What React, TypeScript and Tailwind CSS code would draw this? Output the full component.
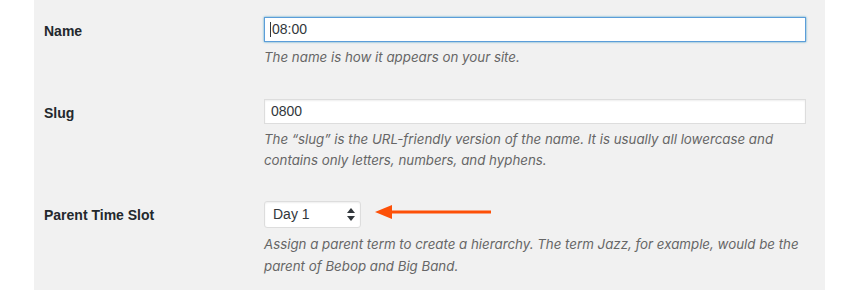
const font = { fontFamily: '"Liberation Sans", Arial, sans-serif' };
const descFont = { fontFamily: 'Inter, "Liberation Sans", Arial, sans-serif' };

const SortArrows = () => (
  <svg width="8" height="13" viewBox="0 0 8 13" className="fill-[#32373c]">
    <path d="M4 0 L8 5 L0 5 Z" />
    <path d="M4 13 L8 8 L0 8 Z" />
  </svg>
);

const PointerArrow = () => (
  <svg width="116" height="18" viewBox="0 0 116 18" className="ml-[14px] mt-[2px]">
    <path d="M0 9 L17 2 L17 16 Z" fill="#fd5008" />
    <rect x="16" y="7.5" width="100" height="3" fill="#fd5008" />
  </svg>
);

const Description = ({ children, cls }: { children: React.ReactNode; cls: string }) => (
  <p className={`italic text-[#666] text-[13.3px] w-[548px] ${cls}`} style={descFont}>
    {children}
  </p>
);

const App = () => {
  return (
    <div
      className="w-[860px] h-[290px] bg-white flex overflow-hidden text-[14px] text-[#23282d]"
      style={font}
    >
      <div className="ml-[34px] w-[791px] h-full bg-[#f1f1f1] pl-[10px] flex flex-col">
        {/* Name */}
        <div className="flex items-start pt-[17px]">
          <label className="w-[220px] mt-[5px] leading-[18px] font-bold">Name</label>
          <div className="flex flex-col">
            <div className="w-[542px] h-[25px] bg-white border border-[#5b9dd9] shadow-[0_0_2px_rgba(30,140,190,0.8)] flex items-center pl-[5px] text-[#32373c]">
              <span className="w-px h-[15px] bg-[#32373c] mr-px" />
              <span>08:00</span>
            </div>
            <Description cls="mt-[5px] leading-[20px]">
              The name is how it appears on your site.
            </Description>
          </div>
        </div>

        {/* Slug */}
        <div className="flex items-start pt-[32px]">
          <label className="w-[220px] mt-[5px] leading-[18px] font-bold">Slug</label>
          <div className="flex flex-col">
            <div className="w-[542px] h-[25px] bg-white border border-[#ddd] shadow-[inset_0_1px_2px_rgba(0,0,0,0.07)] flex items-center pl-[6px] text-[#32373c]">
              0800
            </div>
            <Description cls="mt-[5px] leading-[21px]">
              The “slug” is the URL-friendly version of the name. It is usually all lowercase and
              contains only letters, numbers, and hyphens.
            </Description>
          </div>
        </div>

        {/* Parent */}
        <div className="flex items-start pt-[30px]">
          <label className="w-[220px] mt-[5px] leading-[18px] font-bold">Parent Time Slot</label>
          <div className="flex flex-col">
            <div className="flex items-start">
              <div className="w-[97px] h-[27px] bg-white border border-[#ddd] rounded-[3px] shadow-[inset_0_1px_2px_rgba(0,0,0,0.07)] flex items-center justify-between pl-[8px] pr-[5px] text-[#32373c]">
                <span>Day 1</span>
                <SortArrows />
              </div>
              <PointerArrow />
            </div>
            <Description cls="mt-[5px] leading-[22px]">
              Assign a parent term to create a hierarchy. The term Jazz, for example, would be the
              parent of Bebop and Big Band.
            </Description>
          </div>
        </div>
      </div>
    </div>
  );
};

export default App;
